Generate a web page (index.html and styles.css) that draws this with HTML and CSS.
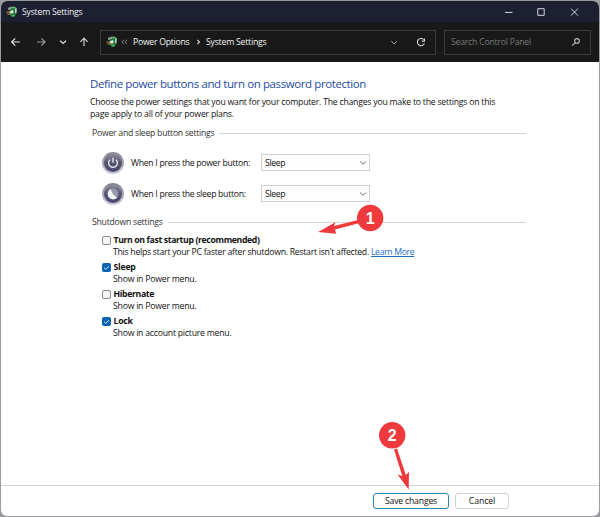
FILE: index.html
```
<!DOCTYPE html>
<html lang="en">
<head>
<meta charset="utf-8">
<title>System Settings</title>
<link rel="stylesheet" href="styles.css">
</head>
<body>
<svg class="defs" width="0" height="0" aria-hidden="true">
  <defs>
    <linearGradient id="rim" x1="0" y1="0" x2="0" y2="1"><stop offset="0" stop-color="#85858f"/><stop offset="1" stop-color="#c9c9da"/></linearGradient>
    <linearGradient id="face" x1="0" y1="0" x2="0" y2="1"><stop offset="0" stop-color="#8c8b9c"/><stop offset=".5" stop-color="#55536f"/><stop offset="1" stop-color="#4a4870"/></linearGradient>
    <symbol id="plug" viewBox="0 0 12 12">
      <path d="M3.4 1.4 6.8.4l3.8 1.2v5.6L8.8 10.4l-3.2.9-2-3z" fill="#23713a"/>
      <path d="M2.2 1.8 5.6.7l1.2 1L4 3.6 2 4z" fill="#9aa59d"/>
      <path d="M5.8.8h3l1 1-2.6 1z" fill="#5fc37a"/>
      <path d="M9 2.4 10.6 2 10.6 6.6 9 7.6z" fill="#b5d9bd"/>
      <path d="M4 5.2 6.6 4 7.8 6 6.6 7.6 4.2 7.4z" fill="#dfe8df"/>
      <path d="M.4 6.1h3.8M1.4 8h3.2" stroke="#c8963a" stroke-width="1"/>
      <path d="M5.4 9.4 8.8 8.4 7.6 10.8z" fill="#52d05c"/>
    </symbol>
  </defs>
</svg>
<div class="window">
  <header class="titlebar">
    <svg class="app-icon" width="12" height="12"><use href="#plug"/></svg>
    <span class="title">System Settings</span>
    <svg class="captions" width="90" height="20" viewBox="0 0 90 20" fill="none" stroke="#d5d7de">
      <path d="M4 10.4h7.5"/><path d="M36.8 6.7h6.4v6.6h-6.4z"/><path d="m70 6.6 7 7m0-7-7 7"/>
    </svg>
  </header>
  <nav class="toolbar">
    <svg class="arrows" width="90" height="20" viewBox="0 0 90 20" fill="none" stroke-width="1.2">
      <path d="M10.8 10H2.6m3.6-3.6L2.6 10l3.6 3.6" stroke="#e6e6e6"/>
      <path d="M28 10h8m-3.6-3.6L36 10l-3.6 3.6" stroke="#9b9b9b"/>
      <path d="m51.2 8.7 2.9 2.7L57 8.7" stroke="#e0e0e0"/>
      <path d="M75 14V6.2m-3.6 3.6L75 6.2l3.6 3.6" stroke="#d0d0d0"/>
    </svg>
    <div class="address">
      <svg class="app-icon" width="12" height="12"><use href="#plug"/></svg>
      <svg class="laquo" width="7" height="8" viewBox="0 0 7 8" fill="none" stroke="#999" stroke-width=".9"><path d="M3 1.8 1 3.8l2 2M6 1.8 4 3.8l2 2"/></svg>
      <span class="crumb crumb-a">Power Options</span>
      <svg class="sep" width="5" height="8" viewBox="0 0 5 8" fill="none" stroke="#ddd" stroke-width="1.1"><path d="M1.3 1.8 3.5 4 1.3 6.2"/></svg>
      <span class="crumb crumb-b">System Settings</span>
      <svg class="addr-tools" width="40" height="16" viewBox="0 0 40 16" fill="none"><path d="m4.4 7.3 2.7 2.6 2.7-2.6" stroke="#aaa"/><path d="M36.6 5.6A3.6 3.6 0 1 0 37.4 9.4M37.5 4.4v2.7h-2.7" stroke="#d6d6d6" stroke-width="1.1"/></svg>
    </div>
    <div class="search">
      <span class="search-text">Search Control Panel</span>
      <svg width="10" height="10" viewBox="0 0 10 10" fill="none" stroke="#bbb" stroke-width="1.1"><circle cx="6" cy="3.9" r="2.3"/><path d="M4.3 5.6 1.2 8.6"/></svg>
    </div>
  </nav>
  <main class="page">
    <h1>Define power buttons and turn on password protection</h1>
    <p class="intro"><span class="intro-a">Choose the power settings that you want for your computer. The changes you make to the settings on this</span><br><span class="intro-b">page apply to all of your power plans.</span></p>
    <div class="group group-power"><span>Power and sleep button settings</span><i></i></div>
    <div class="row">
      <svg width="24" height="24" viewBox="0 0 24 24"><circle cx="12" cy="12" r="11" fill="url(#rim)"/><circle cx="12" cy="12" r="9" fill="url(#face)"/><path d="M9 8.7a4.4 4.4 0 1 0 6 0M12 6.8v5" fill="none" stroke="#dcdce8" stroke-width="1.5"/></svg>
      <span class="label">When I press the power button:</span>
      <div class="select"><span class="opt">Sleep</span><svg width="8" height="6" viewBox="0 0 8 6" fill="none" stroke="#777"><path d="m1 1.5 3 2.8 3-2.8"/></svg></div>
    </div>
    <div class="row">
      <svg width="24" height="24" viewBox="0 0 24 24"><circle cx="12" cy="12" r="11" fill="url(#rim)"/><circle cx="12" cy="12" r="9" fill="url(#face)"/><circle cx="12" cy="12" r="5.4" fill="#9a98ad"/><path d="M9.8 7a5.4 5.4 0 1 0 6.4 8.4A12 12 0 0 1 9.8 7z" fill="#f3f3f8"/></svg>
      <span class="label">When I press the sleep button:</span>
      <div class="select"><span class="opt">Sleep</span><svg width="8" height="6" viewBox="0 0 8 6" fill="none" stroke="#777"><path d="m1 1.5 3 2.8 3-2.8"/></svg></div>
    </div>
    <div class="group group-shutdown"><span>Shutdown settings</span><i></i></div>
    <ul class="options">
      <li><span class="box"></span><b class="long">Turn on fast startup (recommended)</b><p><span class="helps">This helps start your PC faster after shutdown. Restart isn't affected.</span><a class="more">Learn More</a></p></li>
      <li><span class="box on"><svg width="9" height="9" viewBox="0 0 9 9"><path d="m2 4.6 1.8 1.7L7 3" fill="none" stroke="#d8ecff" stroke-width=".9"/></svg></span><b>Sleep</b><p>Show in Power menu.</p></li>
      <li><span class="box"></span><b class="long">Hibernate</b><p>Show in Power menu.</p></li>
      <li><span class="box on"><svg width="9" height="9" viewBox="0 0 9 9"><path d="m2 4.6 1.8 1.7L7 3" fill="none" stroke="#d8ecff" stroke-width=".9"/></svg></span><b>Lock</b><p>Show in account picture menu.</p></li>
    </ul>
  </main>
  <footer class="actions">
    <div class="btn primary">Save changes</div>
    <div class="btn cancel">Cancel</div>
  </footer>
</div>
<svg class="callouts" width="600" height="517" viewBox="0 0 600 517">
  <g fill="#ee3a3d"><path d="M318 232 335.5 222.3 334 226 360 219.5 360.8 222.8 335 229.4 336 233.8z"/><path d="M408.7 489.5 397.5 474.5 402.3 476 394 449.5 397 448.5 405.8 475 409 472z"/><circle cx="370.2" cy="218" r="13.2"/><circle cx="392.2" cy="435.3" r="13.2"/></g>
  <g class="num"><text x="370.2" y="223.5">1</text><text x="392.2" y="441.3">2</text></g>
</svg>
</body>
</html>
```
FILE: styles.css
```
* { box-sizing: border-box; }
body { margin: 0; width: 600px; height: 517px; overflow: hidden; background: #9b9a9f; font: 8.7px/11px "Open Sans", "Noto Sans", sans-serif; letter-spacing: -0.23px; color: #111; }
.defs { position: absolute; }
.window { margin: 1px; width: 598px; height: 515px; border-radius: 6px; overflow: hidden; background: #fff; display: flex; flex-direction: column; }
h1, p, ul { margin: 0; padding: 0; font-weight: normal; }
h1, p, span, b, a, .btn { white-space: nowrap; }
svg { display: block; flex: none; }

.titlebar { height: 21px; flex: none; background: #1c2030; color: #eceef2; display: flex; align-items: center; padding-left: 5px; gap: 4px; letter-spacing: -0.22px; }
.title { padding-top: 2px; }
.captions { margin-left: auto; margin-right: 8px; }
.toolbar { height: 40px; flex: none; background: #191919; display: flex; align-items: center; padding: 0 8px; }
.arrows { margin-right: 1px; }
.address, .search { height: 25px; border: 1px solid #3b3b3b; display: flex; align-items: center; }
.address { width: 336px; padding-left: 5px; color: #f2f2f2; }
.laquo { margin: 0 5px 0 3px; }
.crumb-a { width: 57px; letter-spacing: -0.27px; }
.crumb-b { letter-spacing: -0.22px; }
.sep { margin: 0 5px 0 6px; }
.addr-tools { margin-left: auto; margin-right: 8px; }
.search { width: 147px; margin-left: 8px; padding: 0 9px 0 6px; justify-content: space-between; color: #777; }

.page { flex: 1; padding: 14px 73px 0 89px; }
h1 { font-size: 11.5px; line-height: 16px; letter-spacing: -0.4px; color: #1f4a9e; }
.intro { margin: 5px 0 0; line-height: 11.5px; }
.intro-b { letter-spacing: -0.2px; }
.group { display: flex; align-items: center; color: #333; padding-left: 2px; gap: 5px; height: 12px; letter-spacing: -0.26px; }
.group span { padding-top: 1px; }
.group i { flex: 1; height: 1px; background: #d3d3d3; }
.group-power { margin-top: 7px; margin-bottom: 8px; }
.group-shutdown { margin-top: 7px; }
.row { display: flex; align-items: center; height: 31px; padding-left: 11px; }
.label { width: 130px; margin-left: 6px; padding-top: 1px; letter-spacing: -0.3px; }
.select { width: 109px; height: 17px; border: 1px solid #d0d0d0; background: #fdfdfd; display: flex; align-items: center; justify-content: space-between; padding: 0 2px 0 3px; }
.opt { letter-spacing: -0.35px; padding-top: 2px; }
.options { list-style: none; padding-left: 12px; margin-top: 6px; }
li { display: grid; grid-template-columns: 11px 1fr; height: 27px; grid-template-rows: 12px 12px; align-items: center; }
li p { grid-column: 2; }
b { padding-left: 0.5px; }
.long { letter-spacing: -0.36px; }
.helps { letter-spacing: -0.27px; margin-right: 2px; }
.box { width: 9px; height: 9px; border: 1px solid #8b8b8b; border-radius: 2px; background: #f5f5f5; }
.box.on { border: 0; background: #0a62b5; }
.more { color: #1f6fc4; text-decoration: underline; letter-spacing: -0.35px; }

.actions { height: 31px; flex: none; border-top: 1px solid #d3d3d3; display: flex; justify-content: flex-end; gap: 6px; padding: 7px 90px 0 0; }
.btn { width: 54px; height: 16px; border: 1px solid #d3d3d3; border-radius: 3px; display: flex; align-items: center; justify-content: center; letter-spacing: -0.2px; }
.primary { width: 76px; border-color: #2e82b8; }
.btn.cancel { letter-spacing: -0.1px; }

.callouts { position: absolute; left: 0; top: 0; }
.num { fill: #fff; font: bold 16px "Liberation Sans", sans-serif; text-anchor: middle; }
```
